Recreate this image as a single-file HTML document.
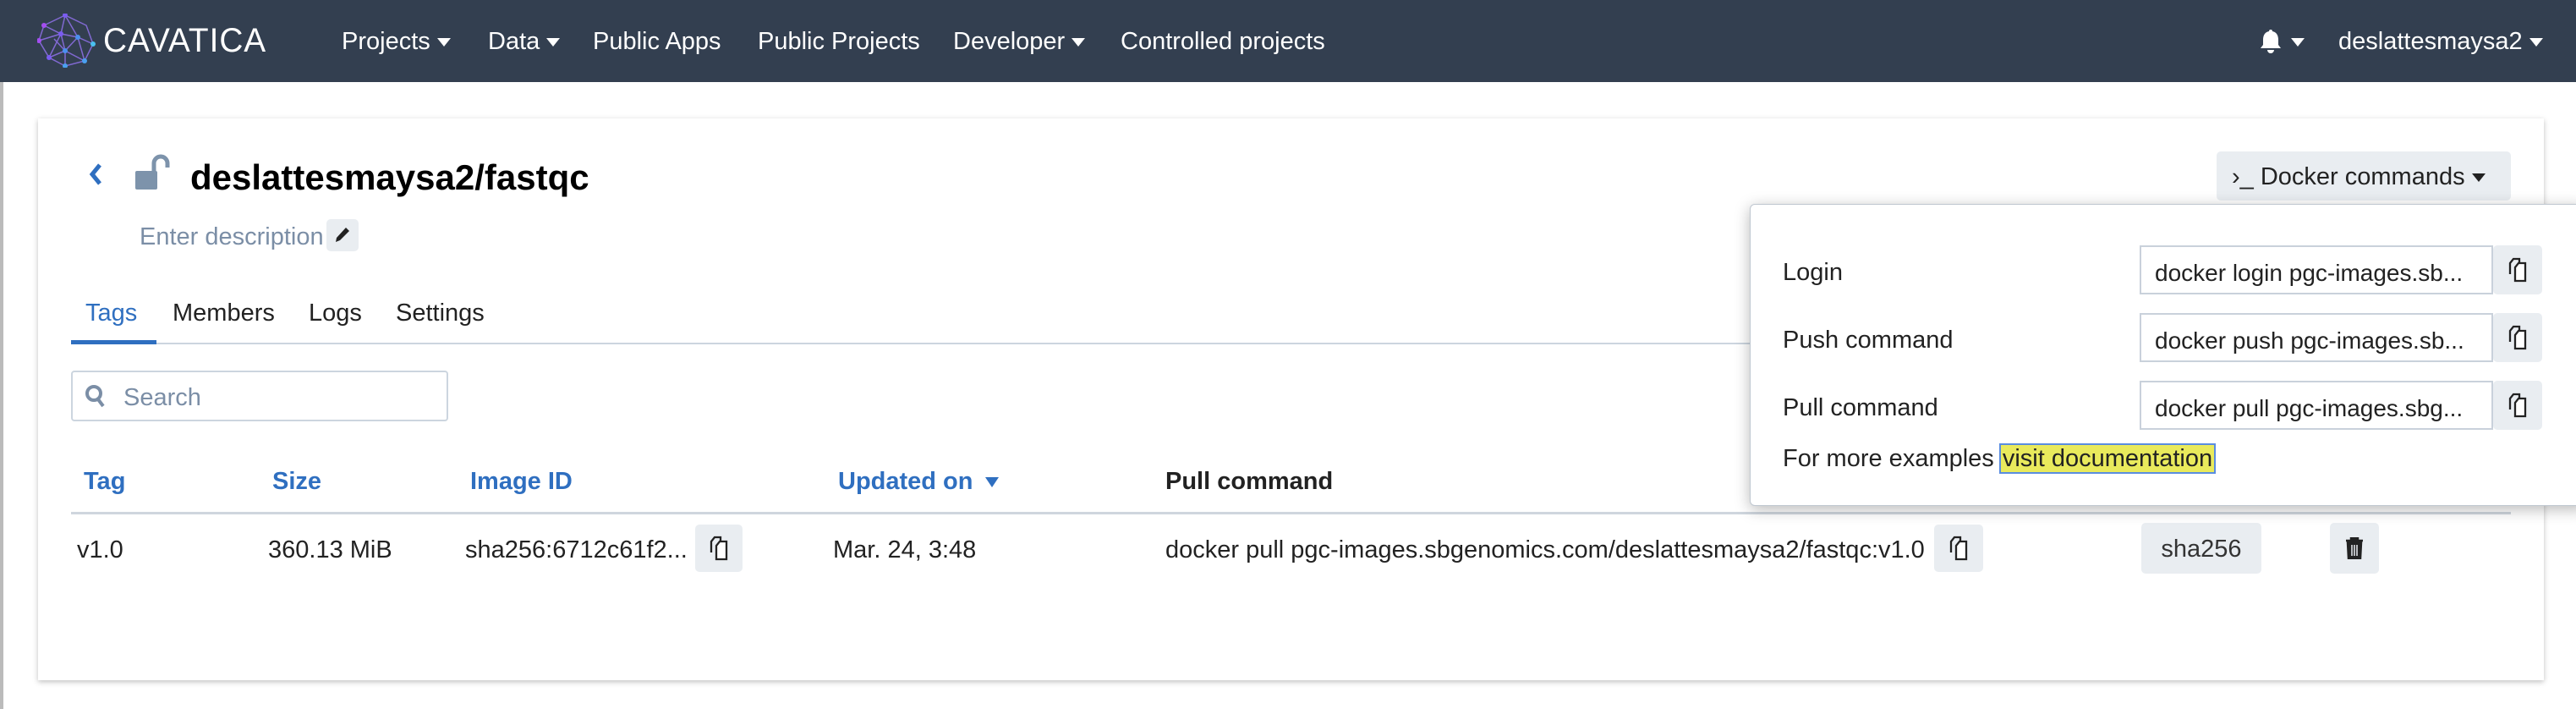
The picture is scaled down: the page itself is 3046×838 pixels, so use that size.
<!DOCTYPE html>
<html><head><meta charset="utf-8"><style>
*{margin:0;padding:0;box-sizing:border-box}
body{width:3046px;height:838px;position:relative;overflow:hidden;background:#fff;font-family:"Liberation Sans",sans-serif;color:#222;font-size:29px}
.a{position:absolute;white-space:nowrap}
.nav{left:0;top:0;width:3046px;height:97px;background:#333f50}
.ni{color:#fff;top:33px;font-size:29px}
.tri{display:inline-block;width:0;height:0;border-left:8px solid transparent;border-right:8px solid transparent;border-top:10px solid currentColor;vertical-align:middle;margin-left:8px}
.card{left:45px;top:140px;width:2963px;height:664px;background:#fff;box-shadow:0 2px 6px rgba(0,0,0,.25)}
.btn{background:#e9edf1;border-radius:5px}
.blue{color:#2f6fc0;font-weight:bold}
.inp{border:2px solid #c9d1db;background:#fff;height:58px;font-size:28px;padding:15px 16px}
.cp{display:flex;align-items:center;justify-content:center}
</style></head><body>
<div class="a" style="left:0;top:0;width:4px;height:838px;background:#bbb"></div>
<div class="a nav"></div>
<svg class="a" style="left:44px;top:16px" width="70" height="64" viewBox="0 0 70 64">
<g stroke="#8a6ee0" stroke-width="1.5" fill="none" opacity=".9">
<path d="M33 2L8 14L2 32L14 52L33 62L56 56L66 36L58 14Z M33 2L28 24L14 52 M8 14L28 24L48 28L66 36 M33 2L48 28L56 56 M2 32L28 24L33 44L56 56 M14 52L33 44L48 28 M33 62L33 44 M20 30L33 44"/></g>
<g fill="#7a5cf0"><circle cx="33" cy="2" r="3"/><circle cx="8" cy="14" r="3" fill="#a44ef0"/><circle cx="2" cy="32" r="3" fill="#a44ef0"/><circle cx="14" cy="52" r="3"/><circle cx="33" cy="62" r="3" fill="#4aa0f0"/><circle cx="56" cy="56" r="3" fill="#4aa0f0"/><circle cx="66" cy="36" r="3" fill="#4ac0f0"/><circle cx="48" cy="28" r="3" fill="#4a90f0"/><circle cx="28" cy="24" r="3"/><circle cx="33" cy="44" r="3" fill="#4a90f0"/></g></svg>
<div class="a" style="left:122px;top:26px;color:#fff;font-size:40px;letter-spacing:1px;transform:scaleX(0.97);transform-origin:left">CAVATICA</div>
<div class="a ni" style="left:404px">Projects<span class="tri"></span></div>
<div class="a ni" style="left:577px">Data<span class="tri"></span></div>
<div class="a ni" style="left:701px">Public Apps</div>
<div class="a ni" style="left:896px">Public Projects</div>
<div class="a ni" style="left:1127px">Developer<span class="tri"></span></div>
<div class="a ni" style="left:1325px">Controlled projects</div>
<svg class="a" style="left:2672px;top:34px" width="26" height="30" viewBox="0 0 26 30"><path d="M13 1a2 2 0 012 2c5 1 7 5 7 10v6l3 4H1l3-4v-6c0-5 2-9 7-10a2 2 0 012-2zM9 25h8a4 4 0 01-8 0z" fill="#fff"/></svg>
<div class="a ni" style="left:2701px;top:33px"><span class="tri"></span></div>
<div class="a ni" style="left:2765px">deslattesmaysa2<span class="tri"></span></div>

<div class="a card"></div>
<svg class="a" style="left:104px;top:192px" width="18" height="28" viewBox="0 0 18 28"><path d="M14 3L5 14l9 11" stroke="#2f6fc0" stroke-width="5" fill="none"/></svg>
<svg class="a" style="left:160px;top:182px" width="44" height="44" viewBox="0 0 44 44"><rect x="0" y="20" width="26" height="22" rx="2" fill="#7d93ab"/><path d="M22 20v-9a8 8 0 0116 0v5" stroke="#7d93ab" stroke-width="5" fill="none"/></svg>
<div class="a" style="left:225px;top:186px;font-size:42px;font-weight:bold;color:#000">deslattesmaysa2/fastqc</div>
<div class="a" style="left:165px;top:264px;color:#7b8ea6">Enter description</div>
<div class="a btn cp" style="left:386px;top:259px;width:38px;height:38px"><svg width="20" height="22" viewBox="0 0 20 22"><path d="M14 2l4 4L7 17l-5 2 1-5z" fill="#222"/></svg></div>
<div class="a" style="left:101px;top:354px;color:#2f6fc0">Tags</div>
<div class="a" style="left:204px;top:354px">Members</div>
<div class="a" style="left:365px;top:354px">Logs</div>
<div class="a" style="left:468px;top:354px">Settings</div>
<div class="a" style="left:84px;top:405px;width:2885px;height:2px;background:#ccd5df"></div>
<div class="a" style="left:84px;top:402px;width:101px;height:5px;background:#2f6fc0"></div>
<div class="a" style="left:84px;top:438px;width:446px;height:60px;border:2px solid #ccd5df;border-radius:4px"></div>
<svg class="a" style="left:100px;top:453px" width="26" height="30" viewBox="0 0 26 30"><circle cx="11" cy="12" r="8" stroke="#7b8ea6" stroke-width="4" fill="none"/><path d="M16 19l6 8" stroke="#7b8ea6" stroke-width="4"/></svg>
<div class="a" style="left:146px;top:454px;color:#7b8ea6">Search</div>
<div class="a blue" style="left:99px;top:553px">Tag</div>
<div class="a blue" style="left:322px;top:553px">Size</div>
<div class="a blue" style="left:556px;top:553px">Image ID</div>
<div class="a blue" style="left:991px;top:553px">Updated on<span class="tri" style="margin-left:14px;border-top-width:12px"></span></div>
<div class="a" style="left:1378px;top:553px;font-weight:bold">Pull command</div>
<div class="a" style="left:84px;top:605px;width:2885px;height:3px;background:#cfd6de"></div>
<div class="a" style="left:91px;top:634px">v1.0</div>
<div class="a" style="left:317px;top:634px">360.13 MiB</div>
<div class="a" style="left:550px;top:634px">sha256:6712c61f2...</div>
<div class="a" style="left:985px;top:634px">Mar. 24, 3:48</div>
<div class="a" style="left:1378px;top:634px">docker pull pgc-images.sbgenomics.com/deslattesmaysa2/fastqc:v1.0</div>
<div class="a btn" style="left:2532px;top:618px;width:142px;height:60px;text-align:center;line-height:62px;color:#333">sha256</div>
<div class="a btn cp" style="left:2755px;top:618px;width:58px;height:60px"><svg width="22" height="26" viewBox="0 0 22 26"><path d="M1 4h20M7 4V1h8v3M3 6h16l-1 19H4z" stroke="#222" stroke-width="2.5" fill="#222"/><path d="M8 9v13M11 9v13M14 9v13" stroke="#e9edf1" stroke-width="1.5"/></svg></div>

<div class="a btn" style="left:2621px;top:179px;width:348px;height:58px;line-height:60px;padding-left:18px;color:#222">›_ Docker commands<span class="tri"></span></div>
<div class="a" style="left:2069px;top:241px;width:990px;height:357px;background:#fff;border:1px solid #bfc7d0;border-radius:6px;box-shadow:0 4px 18px rgba(0,0,0,.28)"></div>
<div class="a" style="left:2108px;top:306px">Login</div>
<div class="a" style="left:2108px;top:386px">Push command</div>
<div class="a" style="left:2108px;top:466px">Pull command</div>
<div class="a inp" style="left:2530px;top:290px;width:418px">docker login pgc-images.sb...</div>
<div class="a inp" style="left:2530px;top:370px;width:418px">docker push pgc-images.sb...</div>
<div class="a inp" style="left:2530px;top:450px;width:418px">docker pull pgc-images.sbg...</div>
<div class="a" style="left:2108px;top:526px">For more examples <span style="background:#e9ea5c;outline:2px solid #5a8de0;padding:0 2px">visit documentation</span></div>

<svg width="0" height="0" style="position:absolute"><defs><symbol id="cp" viewBox="0 0 24 30"><path d="M3 20V7l4-5h7v4" stroke="#222" stroke-width="2.3" fill="none"/><path d="M9 28V12l4-5h8v21z" stroke="#222" stroke-width="2.3" fill="#fff"/></symbol></defs></svg>
<div class="a btn cp" style="left:822px;top:620px;width:56px;height:56px"><svg width="24" height="30"><use href="#cp"/></svg></div>
<div class="a btn cp" style="left:2287px;top:620px;width:58px;height:56px"><svg width="24" height="30"><use href="#cp"/></svg></div>
<div class="a btn cp" style="left:2948px;top:290px;width:58px;height:58px"><svg width="24" height="30"><use href="#cp"/></svg></div>
<div class="a btn cp" style="left:2948px;top:370px;width:58px;height:58px"><svg width="24" height="30"><use href="#cp"/></svg></div>
<div class="a btn cp" style="left:2948px;top:450px;width:58px;height:58px"><svg width="24" height="30"><use href="#cp"/></svg></div>
</body></html>
